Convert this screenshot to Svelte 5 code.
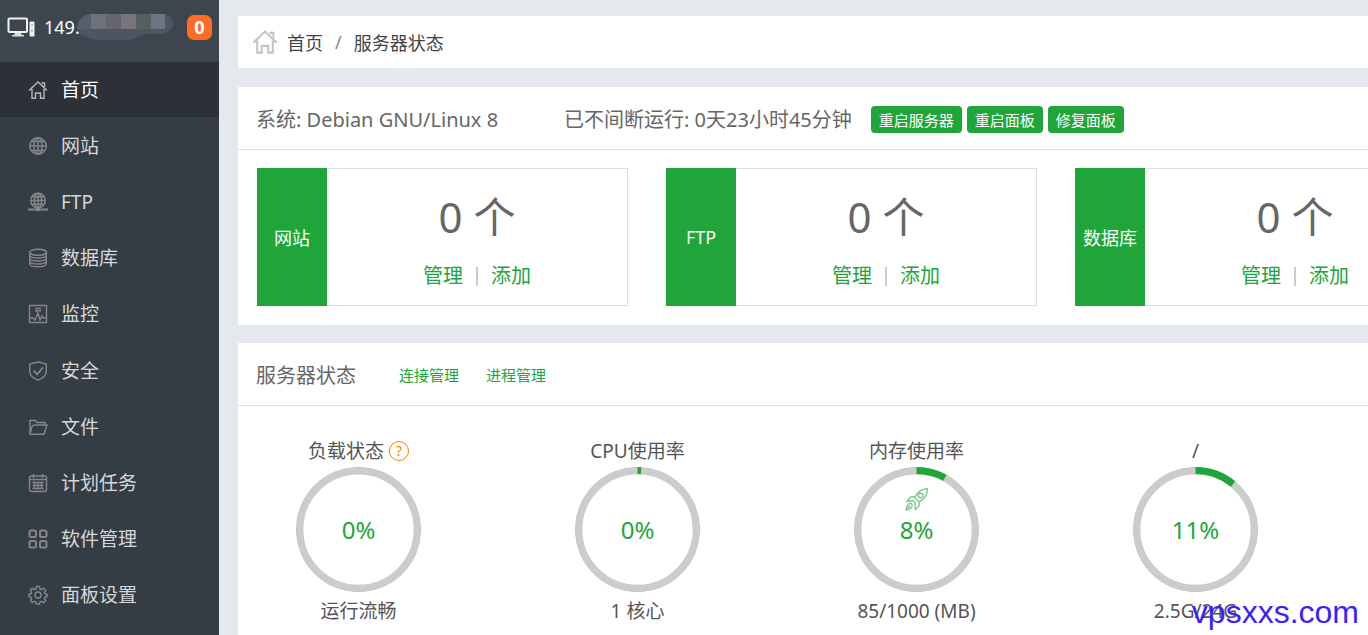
<script>
  const host = '149.';
  const messages = 0;

  const menu = [
    { name: '首页', icon: 'home', active: true },
    { name: '网站', icon: 'globe' },
    { name: 'FTP', icon: 'ftp' },
    { name: '数据库', icon: 'database' },
    { name: '监控', icon: 'monitor' },
    { name: '安全', icon: 'shield' },
    { name: '文件', icon: 'folder' },
    { name: '计划任务', icon: 'calendar' },
    { name: '软件管理', icon: 'grid' },
    { name: '面板设置', icon: 'gear' }
  ];

  const cards = [
    { name: '网站', count: 0 },
    { name: 'FTP', count: 0 },
    { name: '数据库', count: 0 }
  ];

  const gauges = [
    { title: '负载状态', value: 0, arc: 0, info: '运行流畅', help: true },
    { title: 'CPU使用率', value: 0, arc: 1, info: '1 核心' },
    { title: '内存使用率', value: 8, arc: 8, info: '85/1000 (MB)', rocket: true },
    { title: '/', value: 11, arc: 11, info: '2.5G/24G' }
  ];
</script>

{#snippet icon(name)}
  <svg class="icon" viewBox="0 0 20 20" aria-hidden="true">
    {#if name === 'home'}
      <path d="M1 10.500 10 2l9 8.500M13.500 3h3v4M4 9v9.200h3.500v-5.200h5v5.200H16V9" />
    {:else if name === 'globe'}
      <circle cx="10" cy="10" r="8.300" />
      <ellipse cx="10" cy="10" rx="4.200" ry="8.300" />
      <path d="M10 1.500v17M1.500 10h17M3 5.500h14M3 14.500h14" />
    {:else if name === 'ftp'}
      <circle cx="10" cy="8.500" r="7.300" />
      <ellipse cx="10" cy="8.500" rx="3.600" ry="7.300" />
      <path d="M10 1v15M2.700 8.500h14.600M4 4.800h12M4 12.200h12" />
      <path d="M0 17.500h7M13 17.500h7" stroke-width="2" />
      <path d="M7.500 17.500h5" stroke-width="3.200" />
    {:else if name === 'database'}
      <ellipse cx="10" cy="4.300" rx="8.300" ry="3" />
      <path d="M1.700 4.300v11.400c0 4 16.600 4 16.600 0V4.300M1.700 7c0 4 16.600 4 16.600 0M1.700 10c0 4 16.600 4 16.600 0M1.700 13c0 4 16.600 4 16.600 0" />
    {:else if name === 'monitor'}
      <path d="M1.500 1.500h17v17h-17zM7 4.500h6M7 6.800h6M2 14h3l2 2 3-7 2 7 2-4 1.500 2H18" />
    {:else if name === 'shield'}
      <path d="M10 1 18.300 3v7.500c0 4-4 7-8.300 8.700C5.700 17.500 1.700 14.500 1.700 10.500V3z" />
      <path d="m5.500 9.500 3.500 3.800L15 6.500" stroke-width="1.800" />
    {:else if name === 'folder'}
      <path d="M2 17V3.500h5.500l1.500 2h8V8M2 17.300h14L19 8H6.500C4.500 8 4 9 3.700 10.500z" />
    {:else if name === 'calendar'}
      <rect x="1.500" y="3" width="17" height="15.500" rx="2" />
      <path d="M5.500 1v4M14.500 1v4M2 6.500h16M4.500 9.500h11M4.500 12.500h11M4.500 15.500h11M6.500 9v7M10 9v7M13.500 9v7" />
    {:else if name === 'grid'}
      <g stroke-width="2">
        <rect x="1.500" y="1.500" width="6.500" height="6.500" rx="1.500" />
        <rect x="12" y="1.500" width="6.500" height="6.500" rx="1.500" />
        <rect x="1.500" y="12" width="6.500" height="6.500" rx="1.500" />
        <rect x="12" y="12" width="6.500" height="6.500" rx="1.500" />
      </g>
    {:else if name === 'gear'}
      <circle cx="10" cy="10" r="3" />
      <path d="M8.500 1.500h3l.5 2.400 1.500.7L15.700 3.200l2 2.100-1.300 2.200.6 1.300 2 .4v2.400l-2 .5-.6 1.500 1.200 2.100-1.900 2-2.200-1.300-1.500.6-.5 2H8.500l-.5-2-1.500-.6-2.200 1.300-1.900-2 1.200-2.100-.6-1.500-2-.5V9.200l2-.4.6-1.300-1.300-2.200 2-2.100 2.200 1.400L8 3.900z" />
    {/if}
  </svg>
{/snippet}

<div class="layout">
  <aside class="sidebar">
    <header class="host">
      <svg class="computer" viewBox="0 0 28 20" aria-hidden="true">
        <rect x="1.500" y="1.500" width="18.500" height="13.500" rx="1" fill="none" stroke="#f0f0f0" stroke-width="2" />
        <path d="M8 16h6l1 2h2v1.500H5V18h2z" fill="#dcdcdc" />
        <rect x="22.500" y="4.500" width="5" height="15" rx="1" fill="#f0f0f0" />
        <path d="M24 8h2M25 12v3" stroke="#999" fill="none" />
      </svg>
      <span class="address">{host}</span>
      <svg class="mask" viewBox="0 0 96 28" aria-hidden="true">
        <path d="M14 1h69c7 0 13 3 13 9s-4 10-12 11H68c-8 4-12 6-24 6H26C10 27 0 22 0 14 0 8 6 1 14 1z" fill="#4d5660" />
        <path d="M14 1v15H0C0 8 5 2 14 1z" fill="#53606a" />
        <path d="M14 1h15v15H14z" fill="#6c727c" />
        <path d="M29 1h15v15H29z" fill="#65656f" />
        <path d="M44 1h15v15H44z" fill="#76757b" />
        <path d="M59 1h15v15H59z" fill="#565e60" />
        <path d="M74 1h14v15H74z" fill="#6e747d" />
      </svg>
      <span class="badge">{messages}</span>
    </header>
    <nav class="menu">
      {#each menu as item}
        <a href="#{item.icon}" class:active={item.active}>
          {@render icon(item.icon)}
          <span>{item.name}</span>
        </a>
      {/each}
    </nav>
  </aside>

  <main class="main">
    <div class="crumbs">
      {@render icon('home')}
      <a href="#home">首页</a>
      <span class="slash">/</span>
      <span>服务器状态</span>
    </div>

    <section class="panel">
      <div class="panel-head">
        <span class="system">系统: Debian GNU/Linux 8</span>
        <span class="uptime">已不间断运行: 0天23小时45分钟</span>
        <div class="actions">
          <button type="button">重启服务器</button>
          <button type="button">重启面板</button>
          <button type="button">修复面板</button>
        </div>
      </div>
      <div class="cards">
        {#each cards as card}
          <div class="card">
            <div class="card-name">{card.name}</div>
            <div class="card-body">
              <p class="count">{card.count} 个</p>
              <div class="card-links">
                <a href="#manage">管理</a>
                <span class="divider"></span>
                <a href="#add">添加</a>
              </div>
            </div>
          </div>
        {/each}
      </div>
    </section>

    <section class="panel status">
      <div class="panel-head">
        <h2>服务器状态</h2>
        <div class="links">
          <a href="#connections">连接管理</a>
          <a href="#processes">进程管理</a>
        </div>
      </div>
      <div class="gauges">
        {#each gauges as gauge}
          <div class="gauge">
            <h3>
              {gauge.title}
              {#if gauge.help}<button type="button" class="help">?</button>{/if}
            </h3>
            <div class="ring">
              <svg viewBox="0 0 125 125" aria-hidden="true">
                <circle cx="62.500" cy="62.500" r="62" fill="none" stroke="#8fc79b" stroke-width="1" />
                <circle cx="62.500" cy="62.500" r="58.600" fill="none" stroke="#ccc" stroke-width="7" />
                {#if gauge.arc}
                  <circle
                    cx="62.500" cy="62.500" r="59" fill="none" stroke="#20a53a" stroke-width="7"
                    pathLength="100" stroke-dasharray="{gauge.arc} 100" transform="rotate(-90 62.500 62.500)"
                  />
                {/if}
              </svg>
              {#if gauge.rocket}
                <svg class="rocket" viewBox="0 0 24 24" aria-hidden="true">
                  <path d="M22.500 1.500c-6 .5-10 3-13 9l4.500 4.500c6-3 8.500-7 8.500-13.500zM10 9.500l-4.500.5-3.500 4.500 6-1M14.500 14.500l-.5 4.500-3.500 3.500-.5-6M8 13.500l2.500 3" />
                  <circle cx="15.500" cy="8.500" r="2.300" />
                  <path d="M6.500 16.500c-3-1-4.500 2-5.500 6.500 4-.5 7.500-2.500 5.500-6.500zM3 21l2-2.500" />
                </svg>
              {/if}
              <span class="value">{gauge.value}%</span>
            </div>
            <p>{gauge.info}</p>
          </div>
        {/each}
      </div>
    </section>
  </main>

  <div class="watermark">vpsxxs.com</div>
</div>

<style>
  :global(body) {
    background: #e5e8ed;
  }

  .layout {
    display: flex;
    height: 100vh;
    overflow: hidden;
    position: relative;
    font-family: 'Noto Sans', 'Noto Sans CJK SC', sans-serif;
    color: #555;
  }

  a {
    color: inherit;
    text-decoration: none;
  }

  button {
    font-family: inherit;
    cursor: pointer;
  }

  .icon {
    width: 20px;
    height: 20px;
    flex: none;
    fill: none;
    stroke: currentColor;
    stroke-width: 1.4;
  }

  .sidebar {
    width: 219px;
    flex: none;
    display: flex;
    flex-direction: column;
    background: #353d44;
  }

  .host {
    height: 54px;
    padding: 0 7px 8px;
    display: flex;
    align-items: center;
    background: #3d464f;
    color: #fff;
    font-size: 18px;
  }

  .computer {
    width: 28px;
    height: 20px;
    margin-right: 9px;
  }

  .mask {
    width: 96px;
    height: 28px;
    margin-left: -3px;
  }

  .badge {
    margin-left: auto;
    width: 25px;
    line-height: 25px;
    border-radius: 7px;
    background: #ff6c23;
    text-align: center;
    font-weight: bold;
  }

  .menu {
    flex: 1;
    display: flex;
    flex-direction: column;
    gap: 1px;
    padding-bottom: 12px;
  }

  .menu a {
    flex: 1;
    display: flex;
    align-items: center;
    gap: 13px;
    padding-left: 28px;
    font-size: 19px;
    line-height: 28px;
    color: #d5d7d9;
  }

  .menu .icon {
    color: #84878a;
  }

  .menu a.active {
    background: #2c3138;
    color: #fff;
  }

  .menu a.active .icon {
    color: #b5b7ba;
  }

  .main {
    flex: 1;
    min-width: 0;
    display: flex;
    flex-direction: column;
    padding: 16px 0 0 19px;
  }

  .crumbs {
    height: 52px;
    flex: none;
    display: flex;
    align-items: center;
    margin-bottom: 19px;
    padding-left: 14px;
    background: #fff;
    font-size: 18px;
    color: #444;
  }

  .crumbs .icon {
    width: 26px;
    height: 26px;
    margin-right: 9px;
    color: #c4c4c4;
    stroke-width: 1.6;
  }

  .slash {
    margin: 0 12px;
    color: #888;
  }

  .panel {
    flex: none;
    margin-bottom: 18px;
    background: #fff;
    overflow: hidden;
  }

  .panel-head {
    height: 62px;
    display: flex;
    align-items: center;
    padding-left: 18px;
    border-bottom: 1px solid #ddd;
    font-size: 20px;
    color: #666;
    white-space: nowrap;
  }

  .system {
    width: 308px;
  }

  .actions {
    display: flex;
    gap: 5px;
    margin: 2px 0 0 19px;
  }

  .actions button {
    height: 27px;
    padding: 0 8px;
    border: 0;
    border-radius: 4px;
    background: #20a53a;
    color: #fff;
    font-size: 15px;
  }

  .cards {
    display: flex;
    gap: 38px;
    padding: 18px 19px 19px;
  }

  .card {
    flex: 0 0 371px;
    display: flex;
  }

  .card-name {
    width: 70px;
    display: flex;
    align-items: center;
    justify-content: center;
    background: #20a53a;
    color: #fff;
    font-size: 18px;
  }

  .card-body {
    flex: 1;
    padding: 20px 0 14px;
    border: 1px solid #ddd;
    border-left: 0;
    text-align: center;
  }

  .count {
    margin: 0 0 16px;
    font-size: 42px;
    line-height: 56px;
    color: #666;
  }

  .card-links {
    display: flex;
    justify-content: center;
    align-items: center;
    gap: 13px;
    font-size: 20px;
    line-height: 30px;
    color: #20a53a;
  }

  .divider {
    width: 2px;
    height: 19px;
    background: #ccc;
  }

  h2, h3 {
    margin: 0;
    font-weight: normal;
  }

  h2 {
    font-size: 20px;
  }

  .links {
    display: flex;
    gap: 27px;
    margin-left: 43px;
    font-size: 15px;
    color: #20a53a;
  }

  .status {
    flex: 1 0 auto;
    margin-bottom: 0;
  }

  .gauges {
    display: flex;
    padding-top: 29px;
    margin-left: -19px;
  }

  .gauge {
    flex: 0 0 279px;
    display: flex;
    flex-direction: column;
    align-items: center;
    font-size: 19px;
  }

  .gauge h3 {
    display: flex;
    align-items: center;
    gap: 5px;
    font-size: 19px;
    line-height: 32px;
  }

  .help {
    width: 20px;
    height: 20px;
    padding: 0;
    border: 1px solid #fb7d00;
    border-radius: 50%;
    background: none;
    color: #fb7d00;
    font-size: 14px;
    line-height: 18px;
  }

  .ring {
    position: relative;
    width: 125px;
    height: 125px;
    display: flex;
    align-items: center;
    justify-content: center;
  }

  .ring > svg {
    position: absolute;
    inset: 0;
  }

  .ring .rocket {
    inset: 20px auto auto 51px;
    width: 24px;
    height: 24px;
    fill: none;
    stroke: #7cc98a;
    stroke-width: 1.4;
  }

  .value {
    color: #20a53a;
    font-size: 24px;
  }

  .gauge p {
    margin: 5px 0 0;
    line-height: 28px;
  }

  .watermark {
    position: absolute;
    right: 9px;
    bottom: 5px;
    color: #3a1fff;
    font-family: 'Liberation Sans', Arial, sans-serif;
    font-size: 32px;
    line-height: 36px;
  }
</style>
